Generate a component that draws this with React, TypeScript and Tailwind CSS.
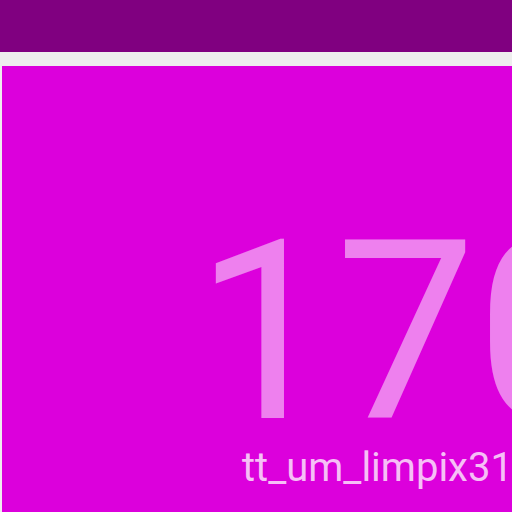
import React from 'react';

export default function App() {
  return (
    <div className="w-[512px] h-[512px] overflow-hidden bg-[#eeeeee] flex flex-col" style={{ fontFamily: 'Roboto, sans-serif' }}>
      {/* header bar */}
      <div className="h-[52px] shrink-0 bg-[#800080]" />

      {/* tile */}
      <div className="mt-[14px] ml-[2px] flex-1 bg-[#dc00dc] overflow-hidden flex flex-col whitespace-nowrap">
        <div className="mt-[142px] pl-[193px] text-[250px] leading-none text-white/50">170</div>
        <div className="-mt-[10px] pl-[240px] text-[40px] leading-none text-white/75">tt_um_limpix31</div>
      </div>
    </div>
  );
}
